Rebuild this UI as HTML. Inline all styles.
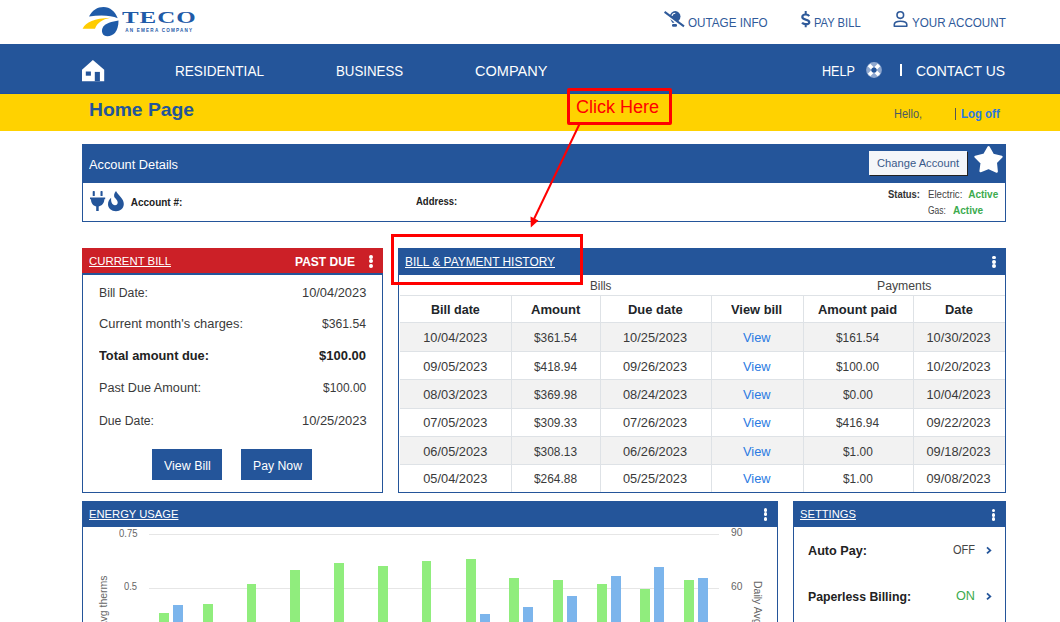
<!DOCTYPE html>
<html><head><meta charset="utf-8"><style>
html,body{margin:0;padding:0;width:1060px;height:622px;overflow:hidden;background:#fff;position:relative}
body{font-family:"Liberation Sans",sans-serif}
.t{position:absolute;white-space:pre;line-height:1;}
.b{position:absolute;}
</style></head><body>
<div class="b" style="left:0px;top:44px;width:1060px;height:49.5px;background:#24559a"></div>
<div class="b" style="left:0px;top:93px;width:1060px;height:1px;background:#1b4fa0"></div>
<div class="b" style="left:0px;top:94px;width:1060px;height:36.5px;background:#ffd200"></div>
<svg class="b" style="left:80px;top:4px" width="40" height="36" viewBox="0 0 40 36">
<path d="M9 12.6 C12 6 17.5 2.9 23.5 2.9 C30 2.9 35.5 7.5 37.7 14.2 C31 11.3 20 10.8 9 12.6 Z" fill="#1f5ba8"/>
<path d="M2.6 24.8 C6 18 14 14.5 30.5 13.8 C22 15.5 17 19 15 24.8Z" fill="#ffcc00"/>
<path d="M38.5 16.5 C38.5 28 33 32.2 27.5 32.2 C22.5 32.2 21 28 22.5 24 C25 19 32 17.5 38.5 16.5Z" fill="#1f5ba8"/>
</svg>
<div class="t" style="left:122px;top:10.4px;font-family:'Liberation Serif',serif;font-weight:bold;font-size:16px;color:#1f5ba8;letter-spacing:0.6px;transform:scaleX(1.56);transform-origin:0 0">TECO</div>
<div class="t" style="left:125.3px;top:29px;font-size:4.6px;font-weight:bold;color:#1f5ba8;letter-spacing:1.2px">AN EMERA COMPANY</div>
<svg class="b" style="left:660px;top:8px" width="30" height="22" viewBox="0 0 30 22">
<circle cx="15.2" cy="8.4" r="5.3" fill="#2f5a9a"/>
<path d="M10.3 11.3 L14.5 14.2 L13.8 14.8 L12.3 14.8 Z" fill="#2f5a9a"/>
<rect x="12" y="15.9" width="5" height="2.9" rx="1.2" fill="#2f5a9a"/>
<line x1="3.9" y1="4.9" x2="23.3" y2="19.4" stroke="#fff" stroke-width="2.4"/>
<line x1="4.6" y1="3.9" x2="24" y2="18.4" stroke="#2f5a9a" stroke-width="2"/>
<path d="M12 7.8 C12.3 6.2 13.5 5.3 15.3 5.2" stroke="#fff" stroke-width="1.1" fill="none"/>
</svg>
<div class="t" style="left:688.30px;top:16.84px;font-size:12px;color:#2f5a9a;transform:scaleX(0.9733);transform-origin:0 0;">OUTAGE INFO</div>
<svg class="b" style="left:798px;top:9px" width="16" height="20" viewBox="0 0 16 20">
<path d="M11.2 7.1 C10.6 6.1 9.4 5.5 7.7 5.5 C5.6 5.5 4.3 6.5 4.3 8 C4.3 9.6 5.8 10.1 7.7 10.6 C9.8 11.1 11.3 11.7 11.3 13.2 C11.3 14.6 9.9 15.2 7.7 15.2 C6 15.2 4.8 14.7 4.1 13.7" fill="none" stroke="#2f5a9a" stroke-width="2.2"/>
<path d="M7.7 2 V5.5 M7.7 15.2 V18.2" stroke="#2f5a9a" stroke-width="2"/>
</svg>
<div class="t" style="left:814.20px;top:16.84px;font-size:12px;color:#2f5a9a;transform:scaleX(0.9313);transform-origin:0 0;">PAY BILL</div>
<svg class="b" style="left:892px;top:10px" width="17" height="18" viewBox="0 0 17 18">
<circle cx="8.3" cy="5.1" r="3.3" fill="none" stroke="#2f5a9a" stroke-width="1.6"/>
<path d="M2.3 16.3 V14.6 C2.3 12.3 4.8 11.2 8.5 11.2 C12.2 11.2 14.8 12.3 14.8 14.6 V16.3 Z" fill="none" stroke="#2f5a9a" stroke-width="1.6" stroke-linejoin="round"/>
</svg>
<div class="t" style="left:911.70px;top:16.84px;font-size:12px;color:#2f5a9a;transform:scaleX(0.9703);transform-origin:0 0;">YOUR ACCOUNT</div>
<svg class="b" style="left:82px;top:60px" width="23" height="22" viewBox="0 0 23 22">
<path d="M10.9 0 L22.2 9.8 L22.2 21.2 L0 21.2 L0 9.8 Z" fill="#fff"/>
<rect x="3.8" y="11.5" width="5.1" height="4.2" fill="#24559a"/>
<rect x="12.8" y="11.9" width="5.1" height="9.3" fill="#24559a"/>
</svg>
<div class="t" style="left:175.10px;top:63.10px;font-size:15px;color:#ffffff;transform:scaleX(0.9048);transform-origin:0 0;">RESIDENTIAL</div>
<div class="t" style="left:335.70px;top:63.10px;font-size:15px;color:#ffffff;transform:scaleX(0.8858);transform-origin:0 0;">BUSINESS</div>
<div class="t" style="left:474.90px;top:63.10px;font-size:15px;color:#ffffff;transform:scaleX(0.9688);transform-origin:0 0;">COMPANY</div>
<div class="t" style="left:821.70px;top:63.10px;font-size:15px;color:#ffffff;transform:scaleX(0.8421);transform-origin:0 0;">HELP</div>
<svg class="b" style="left:864px;top:60.3px" width="20" height="20" viewBox="0 0 20 20">
<circle cx="10" cy="10" r="7.9" fill="#8fa8cf"/>
<g stroke="#fff" stroke-width="3.6">
<line x1="5" y1="5" x2="8.3" y2="8.3"/><line x1="15" y1="5" x2="11.7" y2="8.3"/>
<line x1="5" y1="15" x2="8.3" y2="11.7"/><line x1="15" y1="15" x2="11.7" y2="11.7"/>
</g>
<circle cx="10" cy="10" r="2.6" fill="#24559a"/>
</svg>
<div class="b" style="left:900px;top:63.5px;width:1.6000000000000227px;height:12.0px;background:#fff"></div>
<div class="t" style="left:916.20px;top:63.10px;font-size:15px;color:#ffffff;transform:scaleX(0.9259);transform-origin:0 0;">CONTACT US</div>
<div class="t" style="left:88.80px;top:101.39px;font-size:18.2px;font-weight:bold;color:#24559a;transform:scaleX(1.0593);transform-origin:0 0;">Home Page</div>
<div class="t" style="left:893.90px;top:107.94px;font-size:12px;color:#4a5a60;transform:scaleX(0.9159);transform-origin:0 0;">Hello,</div>
<div class="b" style="left:955px;top:108.2px;width:1.2999999999999545px;height:11.799999999999997px;background:#555"></div>
<div class="t" style="left:960.80px;top:107.94px;font-size:12px;font-weight:bold;color:#2a78e0;transform:scaleX(0.9521);transform-origin:0 0;">Log off</div>
<div class="b" style="left:82px;top:144px;width:924px;height:78px;border:1.5px solid #24559a;background:#fff;box-sizing:border-box"></div>
<div class="b" style="left:82px;top:144px;width:924px;height:39px;background:#24559a"></div>
<div class="t" style="left:89.00px;top:159.04px;font-size:12px;color:#ffffff;transform:scaleX(1.0675);transform-origin:0 0;">Account Details</div>
<div class="b" style="left:869px;top:151px;width:98px;height:24.19999999999999px;background:#f4f6f9;box-shadow:1px 1px 0 #222;"></div>
<div class="t" style="left:877.40px;top:158.36px;font-size:11.5px;color:#3a5a8a;transform:scaleX(0.9716);transform-origin:0 0;">Change Account</div>
<svg class="b" style="left:966px;top:142px" width="42" height="36" viewBox="0 0 42 36">
<path d="M22.6 5.1 L27 12.7 L35.6 14.7 L29.9 20.5 L30.8 29.7 L22.6 26 L14.5 29.1 L15.6 21 L9.4 14.7 L18.3 12.5 Z" fill="#fff" stroke="#fff" stroke-width="2.2" stroke-linejoin="round"/>
</svg>
<svg class="b" style="left:86px;top:188px" width="42" height="26" viewBox="0 0 42 26">
<rect x="6.7" y="3.1" width="2.1" height="4.9" rx="0.6" fill="#24559a"/>
<rect x="14.5" y="3.1" width="2.1" height="4.9" rx="0.6" fill="#24559a"/>
<path d="M4 9.4 H19.2 V11.3 H18.3 C18.3 15.3 16 17.8 12.7 18.4 V23 H10.2 V18.4 C7 17.8 5 15.3 5 11.3 H4 Z" fill="#24559a"/>
<path d="M30 3 C32.5 7.5 37.8 10.5 37.8 16 C37.8 20.5 34.3 23.2 30 23.2 C25.5 23.2 22 20.3 22 16.3 C22 13.5 23.3 11.3 25.2 9.8 C25 11 25 13 25.6 14.5 C26.3 16.3 27.6 17.2 29 17.2 C30.7 17.2 31.7 16 31.7 14.5 C31.7 12.3 29.8 11 28.6 9.5 C27.6 8 28 5 30 3 Z" fill="#24559a"/>
</svg>
<div class="t" style="left:130.70px;top:197.53px;font-size:10px;font-weight:bold;color:#222;">Account #:</div>
<div class="t" style="left:415.80px;top:197.13px;font-size:10px;font-weight:bold;color:#222;transform:scaleX(0.9505);transform-origin:0 0;">Address:</div>
<div class="t" style="left:888.00px;top:190.03px;font-size:10px;font-weight:bold;color:#333;transform:scaleX(0.9441);transform-origin:0 0;">Status:</div>
<div class="t" style="left:927.50px;top:190.03px;font-size:10px;color:#444;transform:scaleX(0.9673);transform-origin:0 0;">Electric:</div>
<div class="t" style="left:968.20px;top:190.03px;font-size:10px;font-weight:bold;color:#3cab4e;">Active</div>
<div class="t" style="left:927.50px;top:205.73px;font-size:10px;color:#444;transform:scaleX(0.8429);transform-origin:0 0;">Gas:</div>
<div class="t" style="left:952.80px;top:205.73px;font-size:10px;font-weight:bold;color:#3cab4e;transform:scaleX(1.0061);transform-origin:0 0;">Active</div>
<div class="b" style="left:82px;top:248px;width:301px;height:245px;border:1.5px solid #24559a;background:#fff;box-sizing:border-box"></div>
<div class="b" style="left:82px;top:248px;width:301px;height:25.5px;background:#cc2027"></div>
<div class="b" style="left:82px;top:273px;width:301px;height:1.5px;background:#24559a"></div>
<div class="t" style="left:88.70px;top:256.01px;font-size:11.8px;color:#ffffff;transform:scaleX(0.9644);transform-origin:0 0;text-decoration:underline;">CURRENT BILL</div>
<div class="t" style="left:295.30px;top:255.84px;font-size:12px;font-weight:bold;color:#ffffff;transform:scaleX(1.0036);transform-origin:0 0;">PAST DUE</div>
<div class="b" style="left:369.1px;top:255.0px;width:3.7999999999999545px;height:3.8000000000000114px;background:#fff;border-radius:50%"></div>
<div class="b" style="left:369.1px;top:259.4px;width:3.7999999999999545px;height:3.8000000000000114px;background:#fff;border-radius:50%"></div>
<div class="b" style="left:369.1px;top:263.8px;width:3.7999999999999545px;height:3.8000000000000114px;background:#fff;border-radius:50%"></div>
<div class="t" style="left:99.40px;top:286.52px;font-size:12.5px;color:#3a3a3a;transform:scaleX(0.9796);transform-origin:0 0;">Bill Date:</div>
<div class="t" style="left:301.90px;top:286.52px;font-size:12.5px;color:#3a3a3a;transform:scaleX(1.0278);transform-origin:0 0;">10/04/2023</div>
<div class="t" style="left:99.40px;top:317.52px;font-size:12.5px;color:#3a3a3a;transform:scaleX(1.0289);transform-origin:0 0;">Current month's charges:</div>
<div class="t" style="left:322.20px;top:317.52px;font-size:12.5px;color:#3a3a3a;transform:scaleX(0.9738);transform-origin:0 0;">$361.54</div>
<div class="t" style="left:99.40px;top:350.12px;font-size:12.5px;font-weight:bold;color:#222;transform:scaleX(1.0242);transform-origin:0 0;">Total amount due:</div>
<div class="t" style="left:319.20px;top:350.12px;font-size:12.5px;font-weight:bold;color:#222;transform:scaleX(1.0402);transform-origin:0 0;">$100.00</div>
<div class="t" style="left:99.40px;top:382.32px;font-size:12.5px;color:#3a3a3a;transform:scaleX(1.0124);transform-origin:0 0;">Past Due Amount:</div>
<div class="t" style="left:323.00px;top:382.32px;font-size:12.5px;color:#3a3a3a;transform:scaleX(0.9561);transform-origin:0 0;">$100.00</div>
<div class="t" style="left:99.40px;top:415.12px;font-size:12.5px;color:#3a3a3a;transform:scaleX(0.9772);transform-origin:0 0;">Due Date:</div>
<div class="t" style="left:301.60px;top:415.12px;font-size:12.5px;color:#3a3a3a;transform:scaleX(1.0326);transform-origin:0 0;">10/25/2023</div>
<div class="b" style="left:152px;top:449px;width:70px;height:31px;background:#24559a"></div>
<div class="b" style="left:241px;top:449px;width:71px;height:31px;background:#24559a"></div>
<div class="t" style="left:163.95px;top:459.52px;font-size:12.5px;color:#ffffff;transform:scaleX(0.9934);transform-origin:0 0;">View Bill</div>
<div class="t" style="left:252.60px;top:459.52px;font-size:12.5px;color:#ffffff;transform:scaleX(0.9796);transform-origin:0 0;">Pay Now</div>
<div class="b" style="left:398px;top:248px;width:608px;height:245px;border:1.5px solid #24559a;background:#fff;box-sizing:border-box"></div>
<div class="b" style="left:398px;top:248px;width:608px;height:26.5px;background:#24559a"></div>
<div class="t" style="left:405.00px;top:256.34px;font-size:12px;color:#ffffff;transform:scaleX(0.9923);transform-origin:0 0;text-decoration:underline;">BILL &amp; PAYMENT HISTORY</div>
<div class="b" style="left:992.1px;top:255.5px;width:3.7999999999999545px;height:3.8000000000000114px;background:#fff;border-radius:50%"></div>
<div class="b" style="left:992.1px;top:259.9px;width:3.7999999999999545px;height:3.8000000000000114px;background:#fff;border-radius:50%"></div>
<div class="b" style="left:992.1px;top:264.3px;width:3.7999999999999545px;height:3.8000000000000114px;background:#fff;border-radius:50%"></div>
<div class="t" style="left:590.30px;top:279.64px;font-size:12px;color:#444;transform:scaleX(0.9726);transform-origin:0 0;">Bills</div>
<div class="t" style="left:876.80px;top:279.64px;font-size:12px;color:#444;transform:scaleX(1.0195);transform-origin:0 0;">Payments</div>
<div class="b" style="left:399.5px;top:295px;width:605.0px;height:1px;background:#dee2e6"></div>
<div class="b" style="left:399.5px;top:322px;width:605.0px;height:29px;background:#f2f2f2"></div>
<div class="b" style="left:399.5px;top:379.4px;width:605.0px;height:28.200000000000045px;background:#f2f2f2"></div>
<div class="b" style="left:399.5px;top:436px;width:605.0px;height:28.30000000000001px;background:#f2f2f2"></div>
<div class="b" style="left:399.5px;top:322px;width:605.0px;height:1px;background:#dee2e6"></div>
<div class="b" style="left:399.5px;top:351px;width:605.0px;height:1px;background:#dee2e6"></div>
<div class="b" style="left:399.5px;top:379.4px;width:605.0px;height:1.0px;background:#dee2e6"></div>
<div class="b" style="left:399.5px;top:407.6px;width:605.0px;height:1.0px;background:#dee2e6"></div>
<div class="b" style="left:399.5px;top:436px;width:605.0px;height:1px;background:#dee2e6"></div>
<div class="b" style="left:399.5px;top:464.3px;width:605.0px;height:1.0px;background:#dee2e6"></div>
<div class="b" style="left:511px;top:296px;width:1px;height:196px;background:#dee2e6"></div>
<div class="b" style="left:599.5px;top:296px;width:1.0px;height:196px;background:#dee2e6"></div>
<div class="b" style="left:710.5px;top:296px;width:1.0px;height:196px;background:#dee2e6"></div>
<div class="b" style="left:803px;top:296px;width:1px;height:196px;background:#dee2e6"></div>
<div class="b" style="left:912.5px;top:296px;width:1.0px;height:196px;background:#dee2e6"></div>
<div class="t" style="left:430.85px;top:304.36px;font-size:12.8px;font-weight:bold;color:#212529;transform:scaleX(0.9802);transform-origin:0 0;">Bill date</div>
<div class="t" style="left:530.50px;top:304.36px;font-size:12.8px;font-weight:bold;color:#212529;transform:scaleX(1.0239);transform-origin:0 0;">Amount</div>
<div class="t" style="left:627.65px;top:304.36px;font-size:12.8px;font-weight:bold;color:#212529;transform:scaleX(1.0119);transform-origin:0 0;">Due date</div>
<div class="t" style="left:731.15px;top:304.36px;font-size:12.8px;font-weight:bold;color:#212529;transform:scaleX(1.0043);transform-origin:0 0;">View bill</div>
<div class="t" style="left:818.20px;top:304.36px;font-size:12.8px;font-weight:bold;color:#212529;transform:scaleX(1.0113);transform-origin:0 0;">Amount paid</div>
<div class="t" style="left:944.55px;top:304.36px;font-size:12.8px;font-weight:bold;color:#212529;transform:scaleX(1.0056);transform-origin:0 0;">Date</div>
<div class="t" style="left:423.22px;top:332.36px;font-size:12.8px;color:#3a3a3a;">10/04/2023</div>
<div class="t" style="left:533.73px;top:332.36px;font-size:12.8px;color:#3a3a3a;transform:scaleX(0.9300);transform-origin:0 0;">$361.54</div>
<div class="t" style="left:622.97px;top:332.36px;font-size:12.8px;color:#3a3a3a;">10/25/2023</div>
<div class="t" style="left:742.99px;top:332.36px;font-size:12.8px;color:#2a7ae2;">View</div>
<div class="t" style="left:836.23px;top:332.36px;font-size:12.8px;color:#3a3a3a;transform:scaleX(0.9300);transform-origin:0 0;">$161.54</div>
<div class="t" style="left:926.47px;top:332.36px;font-size:12.8px;color:#3a3a3a;">10/30/2023</div>
<div class="t" style="left:423.22px;top:360.86px;font-size:12.8px;color:#3a3a3a;">09/05/2023</div>
<div class="t" style="left:533.73px;top:360.86px;font-size:12.8px;color:#3a3a3a;transform:scaleX(0.9300);transform-origin:0 0;">$418.94</div>
<div class="t" style="left:622.97px;top:360.86px;font-size:12.8px;color:#3a3a3a;">09/26/2023</div>
<div class="t" style="left:742.99px;top:360.86px;font-size:12.8px;color:#2a7ae2;">View</div>
<div class="t" style="left:836.23px;top:360.86px;font-size:12.8px;color:#3a3a3a;transform:scaleX(0.9300);transform-origin:0 0;">$100.00</div>
<div class="t" style="left:926.47px;top:360.86px;font-size:12.8px;color:#3a3a3a;">10/20/2023</div>
<div class="t" style="left:423.22px;top:389.16px;font-size:12.8px;color:#3a3a3a;">08/03/2023</div>
<div class="t" style="left:533.73px;top:389.16px;font-size:12.8px;color:#3a3a3a;transform:scaleX(0.9300);transform-origin:0 0;">$369.98</div>
<div class="t" style="left:622.97px;top:389.16px;font-size:12.8px;color:#3a3a3a;">08/24/2023</div>
<div class="t" style="left:742.99px;top:389.16px;font-size:12.8px;color:#2a7ae2;">View</div>
<div class="t" style="left:842.86px;top:389.16px;font-size:12.8px;color:#3a3a3a;transform:scaleX(0.9300);transform-origin:0 0;">$0.00</div>
<div class="t" style="left:926.47px;top:389.16px;font-size:12.8px;color:#3a3a3a;">10/04/2023</div>
<div class="t" style="left:423.22px;top:417.46px;font-size:12.8px;color:#3a3a3a;">07/05/2023</div>
<div class="t" style="left:533.73px;top:417.46px;font-size:12.8px;color:#3a3a3a;transform:scaleX(0.9300);transform-origin:0 0;">$309.33</div>
<div class="t" style="left:622.97px;top:417.46px;font-size:12.8px;color:#3a3a3a;">07/26/2023</div>
<div class="t" style="left:742.99px;top:417.46px;font-size:12.8px;color:#2a7ae2;">View</div>
<div class="t" style="left:836.23px;top:417.46px;font-size:12.8px;color:#3a3a3a;transform:scaleX(0.9300);transform-origin:0 0;">$416.94</div>
<div class="t" style="left:926.47px;top:417.46px;font-size:12.8px;color:#3a3a3a;">09/22/2023</div>
<div class="t" style="left:423.22px;top:445.76px;font-size:12.8px;color:#3a3a3a;">06/05/2023</div>
<div class="t" style="left:533.73px;top:445.76px;font-size:12.8px;color:#3a3a3a;transform:scaleX(0.9300);transform-origin:0 0;">$308.13</div>
<div class="t" style="left:622.97px;top:445.76px;font-size:12.8px;color:#3a3a3a;">06/26/2023</div>
<div class="t" style="left:742.99px;top:445.76px;font-size:12.8px;color:#2a7ae2;">View</div>
<div class="t" style="left:842.86px;top:445.76px;font-size:12.8px;color:#3a3a3a;transform:scaleX(0.9300);transform-origin:0 0;">$1.00</div>
<div class="t" style="left:926.47px;top:445.76px;font-size:12.8px;color:#3a3a3a;">09/18/2023</div>
<div class="t" style="left:423.22px;top:472.76px;font-size:12.8px;color:#3a3a3a;">05/04/2023</div>
<div class="t" style="left:533.73px;top:472.76px;font-size:12.8px;color:#3a3a3a;transform:scaleX(0.9300);transform-origin:0 0;">$264.88</div>
<div class="t" style="left:622.97px;top:472.76px;font-size:12.8px;color:#3a3a3a;">05/25/2023</div>
<div class="t" style="left:742.99px;top:472.76px;font-size:12.8px;color:#2a7ae2;">View</div>
<div class="t" style="left:842.86px;top:472.76px;font-size:12.8px;color:#3a3a3a;transform:scaleX(0.9300);transform-origin:0 0;">$1.00</div>
<div class="t" style="left:926.47px;top:472.76px;font-size:12.8px;color:#3a3a3a;">09/08/2023</div>
<div class="b" style="left:82px;top:500.9px;width:695.5px;height:139.10000000000002px;border:1.5px solid #24559a;background:#fff;box-sizing:border-box"></div>
<div class="b" style="left:82px;top:500.9px;width:695.5px;height:25.800000000000068px;background:#24559a"></div>
<div class="t" style="left:88.80px;top:508.61px;font-size:11.8px;color:#ffffff;transform:scaleX(0.9500);transform-origin:0 0;text-decoration:underline;">ENERGY USAGE</div>
<div class="b" style="left:763.6px;top:508.0px;width:3.7999999999999545px;height:3.8000000000000114px;background:#fff;border-radius:50%"></div>
<div class="b" style="left:763.6px;top:512.4px;width:3.7999999999999545px;height:3.7999999999999545px;background:#fff;border-radius:50%"></div>
<div class="b" style="left:763.6px;top:516.8px;width:3.7999999999999545px;height:3.7999999999999545px;background:#fff;border-radius:50%"></div>
<div class="b" style="left:149px;top:534px;width:570px;height:1px;background:#e6e6e6"></div>
<div class="b" style="left:149px;top:588.3px;width:570px;height:1.0px;background:#e6e6e6"></div>
<div class="t" style="left:118.80px;top:529.13px;font-size:10px;color:#666;transform:scaleX(0.9505);transform-origin:0 0;">0.75</div>
<div class="t" style="left:124.20px;top:582.13px;font-size:10px;color:#666;transform:scaleX(0.9423);transform-origin:0 0;">0.5</div>
<div class="t" style="left:730.60px;top:528.03px;font-size:10px;color:#666;transform:scaleX(1.0249);transform-origin:0 0;">90</div>
<div class="t" style="left:730.60px;top:581.53px;font-size:10px;color:#666;transform:scaleX(1.0249);transform-origin:0 0;">60</div>
<div class="t" style="left:98px;top:653.6px;font-size:10.5px;color:#666;transform:rotate(-90deg);transform-origin:0 0;white-space:nowrap">Daily Avg therms</div>
<div class="t" style="left:763px;top:581px;font-size:10.5px;color:#666;transform:rotate(90deg);transform-origin:0 0;white-space:nowrap">Daily Avg Temp</div>
<div class="b" style="left:159px;top:613px;width:9.800000000000011px;height:9px;background:#90ed7d"></div>
<div class="b" style="left:173px;top:604.8px;width:9.800000000000011px;height:17.200000000000045px;background:#7cb5ec"></div>
<div class="b" style="left:202.8px;top:603.9px;width:9.800000000000011px;height:18.100000000000023px;background:#90ed7d"></div>
<div class="b" style="left:246.6px;top:584.3px;width:9.799999999999983px;height:37.700000000000045px;background:#90ed7d"></div>
<div class="b" style="left:290.3px;top:569.8px;width:9.800000000000011px;height:52.200000000000045px;background:#90ed7d"></div>
<div class="b" style="left:334.1px;top:563.2px;width:9.800000000000011px;height:58.799999999999955px;background:#90ed7d"></div>
<div class="b" style="left:377.9px;top:565.6px;width:9.800000000000011px;height:56.39999999999998px;background:#90ed7d"></div>
<div class="b" style="left:421.7px;top:561.4px;width:9.800000000000011px;height:60.60000000000002px;background:#90ed7d"></div>
<div class="b" style="left:465.8px;top:559px;width:9.800000000000011px;height:63px;background:#90ed7d"></div>
<div class="b" style="left:479.8px;top:614.4px;width:9.800000000000011px;height:7.600000000000023px;background:#7cb5ec"></div>
<div class="b" style="left:509.3px;top:578.4px;width:9.800000000000011px;height:43.60000000000002px;background:#90ed7d"></div>
<div class="b" style="left:523.3px;top:606.8px;width:9.800000000000068px;height:15.200000000000045px;background:#7cb5ec"></div>
<div class="b" style="left:553.3px;top:580.4px;width:9.799999999999955px;height:41.60000000000002px;background:#90ed7d"></div>
<div class="b" style="left:567.3px;top:595.6px;width:9.799999999999955px;height:26.399999999999977px;background:#7cb5ec"></div>
<div class="b" style="left:596.8px;top:584.4px;width:9.799999999999955px;height:37.60000000000002px;background:#90ed7d"></div>
<div class="b" style="left:610.8px;top:576.1px;width:9.799999999999955px;height:45.89999999999998px;background:#7cb5ec"></div>
<div class="b" style="left:640.4px;top:589.3px;width:9.799999999999955px;height:32.700000000000045px;background:#90ed7d"></div>
<div class="b" style="left:654.4px;top:567.2px;width:9.799999999999955px;height:54.799999999999955px;background:#7cb5ec"></div>
<div class="b" style="left:684.3px;top:580.4px;width:9.799999999999955px;height:41.60000000000002px;background:#90ed7d"></div>
<div class="b" style="left:698.3px;top:578.4px;width:9.799999999999955px;height:43.60000000000002px;background:#7cb5ec"></div>
<div class="b" style="left:793px;top:500.9px;width:213px;height:139.10000000000002px;border:1.5px solid #24559a;background:#fff;box-sizing:border-box"></div>
<div class="b" style="left:793px;top:500.9px;width:213px;height:25.800000000000068px;background:#24559a"></div>
<div class="t" style="left:799.90px;top:508.81px;font-size:11.8px;color:#ffffff;transform:scaleX(0.9490);transform-origin:0 0;text-decoration:underline;">SETTINGS</div>
<div class="b" style="left:991.6px;top:508.5px;width:3.7999999999999545px;height:3.7999999999999545px;background:#fff;border-radius:50%"></div>
<div class="b" style="left:991.6px;top:512.9px;width:3.7999999999999545px;height:3.7999999999999545px;background:#fff;border-radius:50%"></div>
<div class="b" style="left:991.6px;top:517.3px;width:3.7999999999999545px;height:3.7999999999999545px;background:#fff;border-radius:50%"></div>
<div class="t" style="left:807.60px;top:543.99px;font-size:13px;font-weight:bold;color:#222;transform:scaleX(0.9724);transform-origin:0 0;">Auto Pay:</div>
<div class="t" style="left:953.20px;top:544.42px;font-size:12.5px;color:#444;transform:scaleX(0.8802);transform-origin:0 0;">OFF</div>
<div class="t" style="left:807.60px;top:589.69px;font-size:13px;font-weight:bold;color:#222;transform:scaleX(0.9442);transform-origin:0 0;">Paperless Billing:</div>
<div class="t" style="left:956.20px;top:590.12px;font-size:12.5px;color:#3cab4e;transform:scaleX(1.0133);transform-origin:0 0;">ON</div>
<svg class="b" style="left:985px;top:545px" width="8" height="11" viewBox="0 0 8 11"><path d="M2 2.4 L5.3 5.4 L2 8.4" stroke="#24559a" stroke-width="1.8" fill="none"/></svg>
<svg class="b" style="left:985px;top:590.7px" width="8" height="11" viewBox="0 0 8 11"><path d="M2 2.4 L5.3 5.4 L2 8.4" stroke="#24559a" stroke-width="1.8" fill="none"/></svg>
<div class="b" style="left:567px;top:88px;width:105px;height:36.5px;border:3px solid #ff0000;box-sizing:border-box;border-radius:2px"></div>
<div class="t" style="left:575.90px;top:98.36px;font-size:18px;color:#ff0000;">Click Here</div>
<div class="b" style="left:391px;top:234.2px;width:191.5px;height:50.900000000000034px;border:3px solid #ff0000;box-sizing:border-box"></div>
<svg class="b" style="left:0;top:0" width="1060" height="622" viewBox="0 0 1060 622">
<line x1="580" y1="123" x2="534" y2="219" stroke="#ff0000" stroke-width="2"/>
<path d="M530.8 227.5 L530.5 216.5 L538.5 220.5 Z" fill="#ff0000"/>
</svg>
</body></html>
